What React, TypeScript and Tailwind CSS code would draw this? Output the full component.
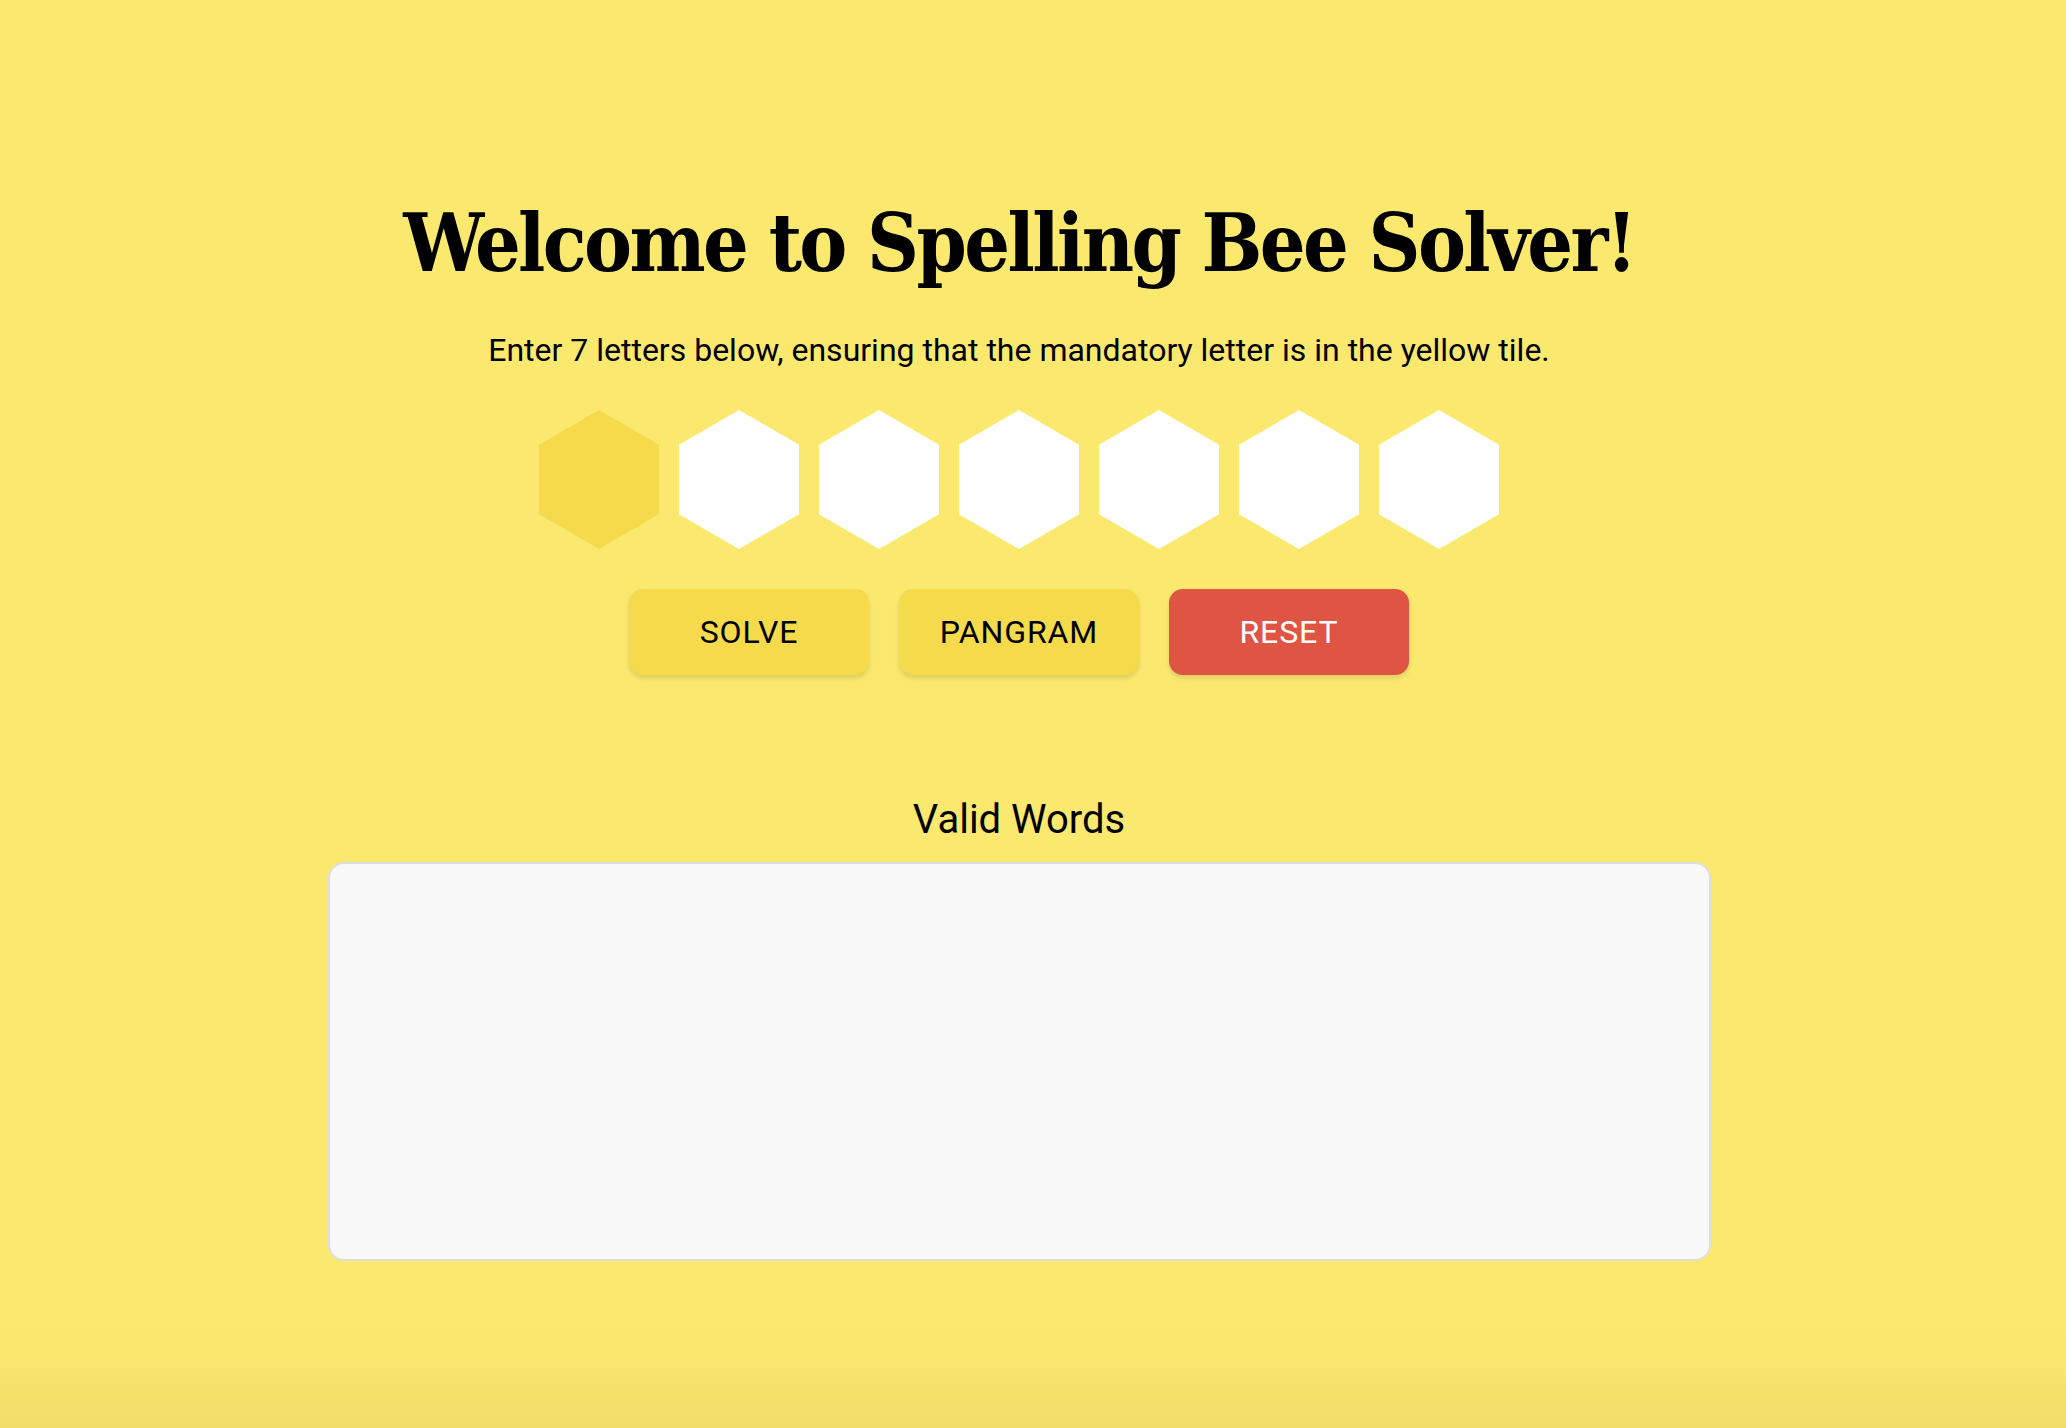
import React from 'react';

const hexClip = '[clip-path:polygon(50%_0,100%_25%,100%_75%,50%_100%,0_75%,0_25%)]';

function Tile({ center }: { center?: boolean }) {
  return (
    <div
      className={`${hexClip} h-[139px] w-[120px] ${center ? 'bg-[#f5da4c]' : 'bg-white'}`}
    />
  );
}

export default function App() {
  const letters = [0, 1, 2, 3, 4, 5, 6];

  return (
    <div className="min-h-screen w-full bg-[linear-gradient(to_bottom,#fbe96f_0%,#fbe96f_93%,#f1de69_100%)] font-['Roboto',sans-serif] text-black">
      <main className="flex w-[2038px] flex-col items-center pt-[193px] pb-[160px]">
        <h1 className="font-['DejaVu_Serif_Condensed','DejaVu_Serif',serif] text-[80px] leading-[100px] font-bold tracking-[-2.6px] [font-stretch:condensed]">
          Welcome to Spelling Bee Solver!
        </h1>
        <p className="mt-[37px] text-[32px] leading-[40px]">
          Enter 7 letters below, ensuring that the mandatory letter is in the yellow tile.
        </p>

        <div className="mt-[40px] flex gap-[20px]">
          {letters.map((i) => (
            <Tile key={i} center={i === 0} />
          ))}
        </div>

        <div className="mt-[40px] flex gap-[30px]">
          <button
            type="button"
            className="h-[86px] w-[240px] rounded-[14px] bg-[#f5da4b] text-[32px] tracking-[0.9px] uppercase shadow-[0_3px_5px_rgba(0,0,0,0.12)]"
          >
            Solve
          </button>
          <button
            type="button"
            className="h-[86px] w-[240px] rounded-[14px] bg-[#f5da4b] text-[32px] tracking-[0.9px] uppercase shadow-[0_3px_5px_rgba(0,0,0,0.12)]"
          >
            Pangram
          </button>
          <button
            type="button"
            className="h-[86px] w-[240px] rounded-[14px] bg-[#e05443] text-[32px] tracking-[0.9px] text-white uppercase shadow-[0_3px_5px_rgba(0,0,0,0.12)]"
          >
            Reset
          </button>
        </div>

        <h2 className="mt-[121px] text-[40px] leading-[48px]">Valid Words</h2>
        <div className="mt-[18px] h-[399px] w-[1383px] rounded-[16px] border-2 border-[#dedede] bg-[#f8f8f8]" />
      </main>
    </div>
  );
}
